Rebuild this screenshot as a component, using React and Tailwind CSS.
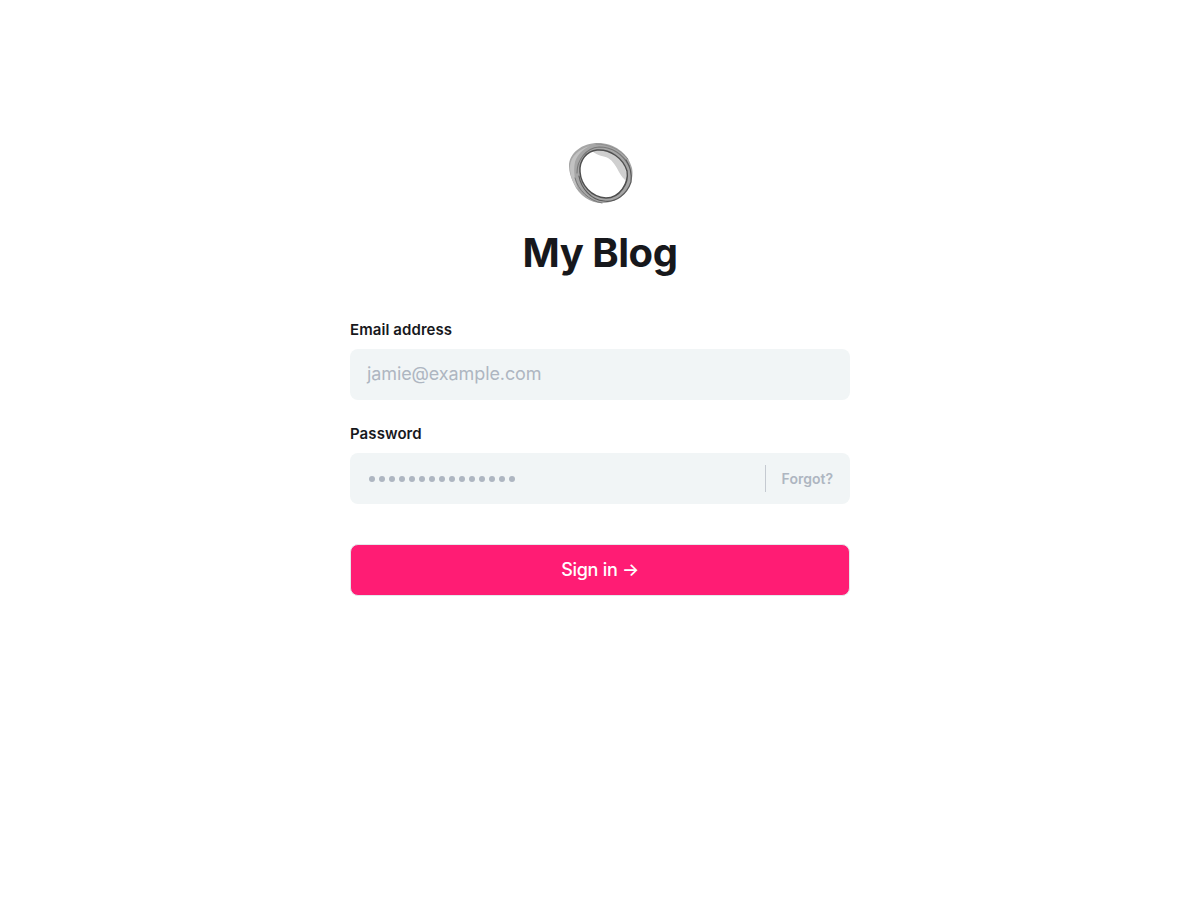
const Logo = () => (
  <svg width="80" height="70" viewBox="0 0 80 70" fill="none">
    <defs>
      <filter id="soft" x="-10%" y="-10%" width="120%" height="120%">
        <feGaussianBlur stdDeviation="0.5" />
      </filter>
    </defs>
    <g filter="url(#soft)">
      {/* ring body with the hole cut out */}
      <path
        fillRule="evenodd"
        d="M9 28C9 15 22 5 38 5C54 5 68 15 72 30C75 44 65 60 50 64C35 68 20 60 14 46C11 40 9 34 9 28ZM20 34C20 47 31 59 46 60C58 60 68 47 67 33C63 20 50 11 37 12C27 13 19 22 20 34Z"
        fill="#a6a6a6"
      />
      {/* light crescent inside the ring, top right */}
      <path d="M32 13C38 11 50 12 57 18C63 23 67 30 67 44C64 41 61 38 59 34C56 28 53 23 48 20C44 18 38 18 32 13Z" fill="#cfcfcf" />
      <path d="M10 28C10 38 13 46 18 51C15 43 13 33 15 24C17 17 23 11 30 8C19 11 11 18 10 28Z" fill="#c2c2c2" />
      <g fill="none" strokeLinecap="round">
        <path d="M20 34C19 22 27 13 37 12C50 11 63 20 67 33C69 45 60 60 46 60C31 59 21 47 20 34Z" stroke="#4f4f4f" strokeWidth="1.5" />
        <path d="M17 35C17 22 26 10 39 9C52 9 63 16 69 28" stroke="#787878" strokeWidth="1.1" />
        <path d="M19 38C21 50 31 62 44 63C56 65 67 56 71 44C72 36 70 28 66 22" stroke="#5a5a5a" strokeWidth="1.2" />
        <path d="M15 40C18 52 29 63 42 65" stroke="#777777" strokeWidth="1" />
        <path d="M36 6C48 6 60 11 68 21" stroke="#8a8a8a" strokeWidth="0.9" />
      </g>
    </g>
  </svg>
);

const App = () => {
  return (
    <div className="min-h-[900px] bg-white flex justify-center font-['Inter',sans-serif] text-[#17181c]">
      <div className="w-[500px] pt-[138px]">
        <div className="flex justify-center">
          <Logo />
        </div>
        <h1 className="mt-[17px] text-center text-[40px] leading-[56px] font-bold tracking-[-0.5px]">My Blog</h1>

        <form className="mt-[39px]" onSubmit={(e) => e.preventDefault()}>
          <label className="block text-[15px] leading-5 font-semibold tracking-[0.08px]">Email address</label>
          <div className="mt-[9px] h-[51px] rounded-lg bg-[#f1f5f6] flex items-center px-[17px] pb-[1px] text-lg tracking-[-0.1px] text-[#aeb6c1]">
            jamie@example.com
          </div>

          <label className="block mt-[24px] text-[15px] leading-5 font-semibold tracking-[0.08px]">Password</label>
          <div className="mt-[9px] h-[51px] rounded-lg bg-[#f1f5f6] flex items-center pl-[19px] pr-[17px]">
            <div className="flex-1 flex gap-[4px]">
              {Array.from({ length: 15 }).map((_, i) => (
                <span key={i} className="w-[6px] h-[6px] rounded-full bg-[#aeb6c1]" />
              ))}
            </div>
            <div className="w-px h-[27px] bg-[#c5cad1] mr-[16px]" />
            <span className="text-sm font-semibold text-[#aeb6c1]">Forgot?</span>
          </div>

          <button
            type="submit"
            className="mt-[40px] w-full h-[52px] rounded-lg bg-[#ff1c74] border border-[#e5e7eb] text-white text-lg font-medium tracking-[-0.3px]"
          >
            Sign in →
          </button>
        </form>
      </div>
    </div>
  );
};

export default App;
